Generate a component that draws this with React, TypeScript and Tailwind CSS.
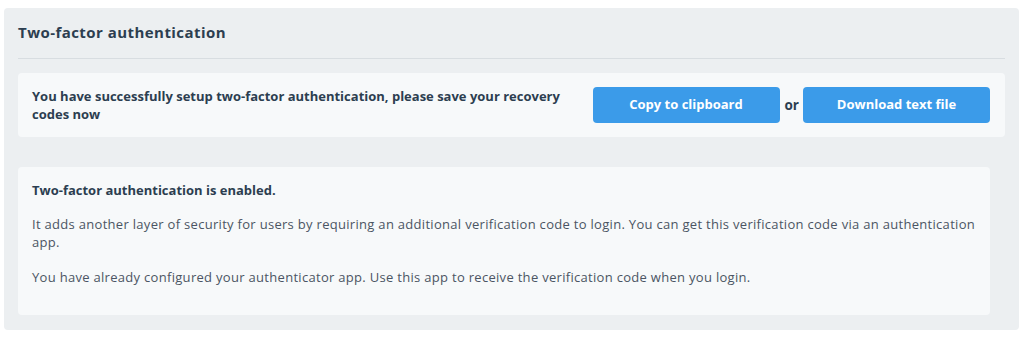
export default function App() {
  return (
    <div className="min-h-screen bg-white pl-[4px] pr-[5px] pt-[8px] font-['Open_Sans',sans-serif]">
      {/* Panel */}
      <div className="rounded-[4px] bg-[#eceff1] px-[14px] pt-[14px] pb-[15px]">
        <h2 className="text-[15px] leading-[20px] font-bold tracking-[0.45px] text-[#2c3e50]">Two-factor authentication</h2>
        <div className="mt-[16px] h-px bg-[#d8dde1]"></div>

        {/* Recovery codes */}
        <div className="mt-[14px] flex items-center rounded-[4px] bg-[#f7f9fa] py-[14px] pl-[14px] pr-[15px]">
          <p className="w-[545px] text-[13px] leading-[18px] font-bold text-[#2c3e50]">
            You have successfully setup two-factor authentication, please save your recovery codes now
          </p>
          <div className="ml-auto flex items-center">
            <button className="h-[36px] w-[187px] rounded-[4px] bg-[#3b9be9] text-[13px] font-bold text-white">
              Copy to clipboard
            </button>
            <span className="ml-[5px] mr-[4px] text-[13.5px] font-bold text-[#2c3e50]">or</span>
            <button className="h-[36px] w-[187px] rounded-[4px] bg-[#3b9be9] text-[13px] font-bold text-white">
              Download text file
            </button>
          </div>
        </div>

        {/* Status */}
        <div className="mt-[30px] mr-[15px] rounded-[4px] bg-[#f7f9fa] pl-[14px] pr-[10px] pt-[14px] pb-[29px]">
          <h3 className="text-[13px] leading-[18px] font-bold text-[#2c3e50]">Two-factor authentication is enabled.</h3>
          <p className="mt-[16px] text-[13px] leading-[18px] tracking-[0.3px] text-[#4b5563]">
            It adds another layer of security for users by requiring an additional verification code to login. You can
            get this verification code via an authentication app.
          </p>
          <p className="mt-[17px] text-[13px] leading-[18px] tracking-[0.3px] text-[#4b5563]">
            You have already configured your authenticator app. Use this app to receive the verification code when you
            login.
          </p>
        </div>
      </div>
    </div>
  );
}
